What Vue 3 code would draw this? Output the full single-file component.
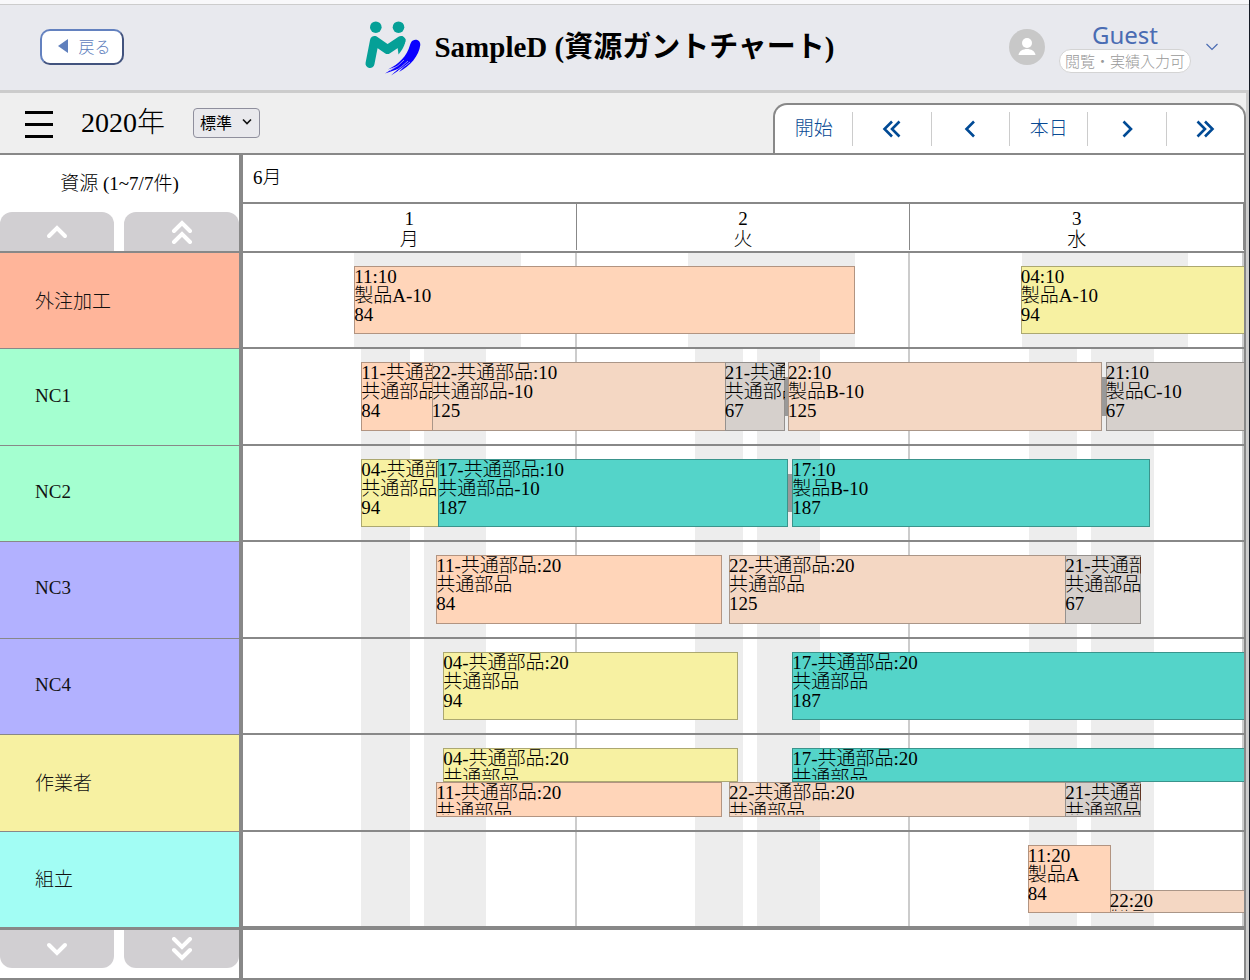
<script setup>
import { ref } from 'vue'

const TOTAL_HOURS = 72
const scale = ref('standard')

const days = [
  { num: '1', name: '月' },
  { num: '2', name: '火' },
  { num: '3', name: '水' }
]

const colors = {
  peach: '#ffd5b9',
  sand: '#f4d7c3',
  gray: '#d6d0cc',
  yellow: '#f7f1a2',
  teal: '#54d4c9'
}

const outsideShift = [[8, 20]]
const dayShift = [[8.5, 12], [13, 17.5]]

const bar = (from, to, color, lines, top = 0, height = 100) => ({ from, to, color, lines, top, height })

const rows = [
  {
    name: '外注加工', color: '#ffb59a', shift: outsideShift, links: [],
    bars: [
      bar(8, 44, 'peach', ['11:10', '製品A-10', '84']),
      bar(55.95, 80, 'yellow', ['04:10', '製品A-10', '94'])
    ]
  },
  {
    name: 'NC1', color: '#a4ffd0', shift: dayShift, links: [[39, 39.3], [61.8, 62.1]],
    bars: [
      bar(8.5, 13.7, 'peach', ['11-共通部品:10', '共通部品-10', '84']),
      bar(13.57, 34.75, 'sand', ['22-共通部品:10', '共通部品-10', '125']),
      bar(34.65, 39, 'gray', ['21-共通部品:10', '共通部品-10', '67']),
      bar(39.2, 61.8, 'sand', ['22:10', '製品B-10', '125']),
      bar(62.05, 80, 'gray', ['21:10', '製品C-10', '67'])
    ]
  },
  {
    name: 'NC2', color: '#a4ffd0', shift: dayShift, links: [[39.2, 39.5]],
    bars: [
      bar(8.5, 14.15, 'yellow', ['04-共通部品:10', '共通部品-10', '94']),
      bar(14.05, 39.2, 'teal', ['17-共通部品:10', '共通部品-10', '187']),
      bar(39.5, 65.25, 'teal', ['17:10', '製品B-10', '187'])
    ]
  },
  {
    name: 'NC3', color: '#b2b1ff', shift: dayShift, links: [],
    bars: [
      bar(13.9, 34.45, 'peach', ['11-共通部品:20', '共通部品', '84']),
      bar(34.95, 59.25, 'sand', ['22-共通部品:20', '共通部品', '125']),
      bar(59.15, 64.6, 'gray', ['21-共通部品:20', '共通部品', '67'])
    ]
  },
  {
    name: 'NC4', color: '#b2b1ff', shift: dayShift, links: [],
    bars: [
      bar(14.4, 35.6, 'yellow', ['04-共通部品:20', '共通部品', '94']),
      bar(39.5, 80, 'teal', ['17-共通部品:20', '共通部品', '187'])
    ]
  },
  {
    name: '作業者', color: '#f7f1a2', shift: dayShift, links: [],
    bars: [
      bar(14.4, 35.6, 'yellow', ['04-共通部品:20', '共通部品', '94'], 0, 50),
      bar(39.5, 80, 'teal', ['17-共通部品:20', '共通部品', '187'], 0, 50),
      bar(13.9, 34.45, 'peach', ['11-共通部品:20', '共通部品', '84'], 50, 50),
      bar(34.95, 59.25, 'sand', ['22-共通部品:20', '共通部品', '125'], 50, 50),
      bar(59.15, 64.6, 'gray', ['21-共通部品:20', '共通部品', '67'], 50, 50)
    ]
  },
  {
    name: '組立', color: '#a2fdf4', shift: dayShift, links: [],
    bars: [
      bar(56.45, 62.45, 'peach', ['11:20', '製品A', '84']),
      bar(62.35, 80, 'sand', ['22:20', '製品B', '125'], 66, 34)
    ]
  }
]

const pct = (hours) => (hours / TOTAL_HOURS) * 100 + '%'
const span = (from, to) => ({ left: pct(from), width: pct(to - from) })
const bands = (shift) => days.flatMap((_, d) => shift.map(([a, b]) => span(a + d * 24, b + d * 24)))
const barStyle = (b) => ({
  ...span(b.from, b.to),
  top: b.top + '%',
  height: b.height + '%',
  background: colors[b.color]
})
</script>

<template>
  <div class="app">
    <header class="header">
      <button class="back" type="button">
        <svg width="10" height="14" viewBox="0 0 10 14"><path d="M10 0V14L0 7Z" fill="#6080bd" /></svg>
        <span>戻る</span>
      </button>
      <div class="brand">
        <svg class="logo" width="58" height="56" viewBox="365 22 58 56">
          <g fill="#05a097">
            <circle cx="376.800" cy="28.200" r="5.800" />
            <circle cx="399.500" cy="28.200" r="5.800" />
          </g>
          <path d="M371 64.500L375.500 41.500L388.500 50.500L402 41.500" fill="none" stroke="#05a097" stroke-width="9" stroke-linecap="round" stroke-linejoin="round" />
          <path d="M406.500 40C406.500 46 403 51 399.500 55.500L398.500 48L403 37Z" fill="#05a097" />
          <path d="M414 41.500C417 39.800 421.500 41.500 421.300 46C420 57 411 67 400 73L404 68.500L392 76.500L399 70L386 74.500L397 67.500L389 70.500C400 65 408 57 411 46C412 43.500 412.500 42 414 41.500Z" fill="#0a00ff" />
          <g fill="none" stroke="#e8e9ee" stroke-width="0.600">
            <path d="M391 71.500Q400 67 405 61" />
            <path d="M394 73.500Q403 68 409 62" />
            <path d="M399 72Q406 67 411 63" />
          </g>
        </svg>
        <h1>SampleD (資源ガントチャート)</h1>
      </div>
      <button class="user" type="button">
        <svg class="avatar" width="36" height="36" viewBox="0 0 36 36">
          <circle cx="18" cy="18" r="18" fill="#c8c8c8" />
          <circle cx="18" cy="14" r="5" fill="#fff" />
          <path d="M9.500 26C10 22 14 20 18 20S26 22 26.500 26Z" fill="#fff" />
        </svg>
        <span class="who">
          <span class="name">Guest</span>
          <span class="role">閲覧・実績入力可</span>
        </span>
        <svg width="14" height="10" viewBox="0 0 14 10"><path d="M1.500 2L7 7.500L12.500 2" fill="none" stroke="#4a6cb3" stroke-width="1.200" /></svg>
      </button>
    </header>

    <main class="work">
      <div class="toolbar">
        <button class="menu" type="button" aria-label="メニュー"><i></i><i></i><i></i></button>
        <span class="year">2020年</span>
        <div class="select">
          <select v-model="scale" aria-label="表示">
            <option value="standard">標準</option>
          </select>
          <svg width="10" height="8" viewBox="0 0 10 8"><path d="M1 1.500L5 5.500L9 1.500" fill="none" stroke="#111" stroke-width="1.600" /></svg>
        </div>
        <nav class="nav">
          <button type="button">開始</button>
          <button type="button" aria-label="前へ大きく移動">
            <svg width="20" height="18" viewBox="0 0 20 18"><path d="M10 1.500L2.500 9L10 16.500M17.500 1.500L10 9L17.500 16.500" /></svg>
          </button>
          <button type="button" aria-label="前へ">
            <svg width="12" height="18" viewBox="0 0 12 18"><path d="M10 1.500L2.500 9L10 16.500" /></svg>
          </button>
          <button type="button">本日</button>
          <button type="button" aria-label="次へ">
            <svg width="12" height="18" viewBox="0 0 12 18"><path d="M2.500 1.500L10 9L2.500 16.500" /></svg>
          </button>
          <button type="button" aria-label="次へ大きく移動">
            <svg width="20" height="18" viewBox="0 0 20 18"><path d="M2.500 1.500L10 9L2.500 16.500M10 1.500L17.500 9L10 16.500" /></svg>
          </button>
        </nav>
      </div>

      <div class="gantt">
        <div class="corner">
          <div class="count">資源 (1~7/7件)</div>
          <div class="pager up">
            <button type="button" aria-label="上へ">
              <svg width="24" height="24" viewBox="0 0 24 24"><path d="M4 16L12 8L20 16" /></svg>
            </button>
            <button type="button" aria-label="先頭へ">
              <svg width="24" height="24" viewBox="0 0 24 24"><path d="M4 11L12 3L20 11M4 22L12 14L20 22" /></svg>
            </button>
          </div>
        </div>
        <div class="scale">
          <div class="month">6月</div>
          <div class="days">
            <div v-for="d in days" :key="d.num" class="day">
              <span>{{ d.num }}</span><span>{{ d.name }}</span>
            </div>
          </div>
        </div>

        <template v-for="row in rows" :key="row.name">
          <div class="resource" :style="{ background: row.color }">{{ row.name }}</div>
          <div class="track">
            <div v-for="(b, i) in bands(row.shift)" :key="'s' + i" class="band" :style="b"></div>
            <div class="lines"><i v-for="d in days" :key="d.num"></i></div>
            <div class="lane">
              <div v-for="(l, i) in row.links" :key="'l' + i" class="link" :style="span(l[0], l[1])"></div>
              <div v-for="(b, i) in row.bars" :key="i" class="bar" :style="barStyle(b)">
                <div class="label">
                  <div v-for="t in b.lines" :key="t">{{ t }}</div>
                </div>
              </div>
            </div>
          </div>
        </template>

        <div class="foot-left">
          <div class="pager down">
            <button type="button" aria-label="下へ">
              <svg width="24" height="24" viewBox="0 0 24 24"><path d="M4 8L12 16L20 8" /></svg>
            </button>
            <button type="button" aria-label="末尾へ">
              <svg width="24" height="24" viewBox="0 0 24 24"><path d="M4 2L12 10L20 2M4 13L12 21L20 13" /></svg>
            </button>
          </div>
        </div>
        <div class="foot-right"></div>
      </div>
    </main>
  </div>
</template>

<style>
body {
  margin: 0;
}
</style>

<style scoped>
.app {
  min-height: 100vh;
  box-sizing: border-box;
  display: flex;
  flex-direction: column;
  border-right: 1px solid #141a24;
  background: #efefef;
  color: #000;
  font-family: "Liberation Serif", "Noto Sans CJK JP", serif;
  font-size: 19px;
  font-weight: 300;
}
.app *,
.app *::before {
  box-sizing: border-box;
}
button {
  margin: 0;
  padding: 0;
  border: 0;
  background: none;
  font: inherit;
  color: inherit;
  cursor: pointer;
}
svg {
  display: block;
  flex: none;
}

.header {
  height: 93px;
  display: grid;
  grid-template-columns: 1fr auto 1fr;
  align-items: center;
  padding: 0 30px 1px 40px;
  border-top: 4px solid #f8f8fa;
  border-bottom: 3px solid #ccc;
  background: #e8e9ee;
  box-shadow: inset 0 1px #ccc;
}
.back {
  display: flex;
  align-items: center;
  justify-content: center;
  gap: 10px;
  width: 84px;
  height: 36px;
  padding: 0 0 2px 5px;
  border: 2px solid;
  border-color: #6381bf #42537e #42537e #6381bf;
  border-radius: 10px;
  background: #fff;
  color: #6080bd;
  font-family: "Noto Sans CJK JP", sans-serif;
  font-size: 16px;
  line-height: 24px;
}
.brand {
  display: flex;
  align-items: center;
  gap: 12px;
  margin-right: 60px;
}
.logo {
  margin-top: 5px;
}
h1 {
  margin: 0;
  font-size: 29px;
  line-height: 40px;
  font-weight: 700;
  white-space: nowrap;
}
.user {
  justify-self: end;
  display: flex;
  align-items: center;
  gap: 14px;
  font-family: "Noto Sans", "Noto Sans CJK JP", sans-serif;
}
.who {
  display: flex;
  flex-direction: column;
  align-items: center;
}
.name {
  color: #4a6cb3;
  font-size: 24px;
  line-height: 28px;
  font-weight: 400;
}
.role {
  padding: 0 5px;
  border: 1px solid #d4d4d4;
  border-radius: 12px;
  background: #fff;
  color: #999;
  font-family: "Noto Sans CJK JP", sans-serif;
  font-size: 15px;
  line-height: 22px;
  white-space: nowrap;
}

.work {
  flex: 1;
  display: flex;
  flex-direction: column;
  border-right: 3px solid #ccc;
}
.toolbar {
  display: flex;
  align-items: center;
  height: 60px;
  padding-left: 25px;
}
.menu {
  display: flex;
  flex-direction: column;
  gap: 9px;
  width: 28px;
  padding-top: 3px;
}
.menu i {
  height: 3px;
  background: #000;
}
.year {
  margin: 0 28px;
  font-size: 28px;
  line-height: 40px;
}
.select {
  position: relative;
}
.select select {
  appearance: none;
  width: 67px;
  height: 30px;
  padding: 0 0 2px 6px;
  border: 1px solid #8f8f9d;
  border-radius: 4px;
  background: #e9e9ed;
  color: #000;
  font-family: "Noto Sans CJK JP", sans-serif;
  font-size: 16px;
}
.select svg {
  position: absolute;
  right: 8px;
  top: 10px;
  pointer-events: none;
}
.nav {
  display: flex;
  align-self: flex-end;
  align-items: center;
  width: 473px;
  height: 50px;
  margin-left: auto;
  border: 2px solid #888;
  border-bottom: 0;
  border-radius: 14px 14px 0 0;
  background: #fff;
}
.nav button {
  flex: 1;
  display: flex;
  align-items: center;
  justify-content: center;
  height: 34px;
  border-right: 1px solid #ccc;
  color: #084a94;
  line-height: 28px;
}
.nav button:last-child {
  border-right: 0;
}
.nav path {
  fill: none;
  stroke: #004a95;
  stroke-width: 2.600;
}

.gantt {
  flex: 1;
  display: grid;
  grid-template-columns: 243px minmax(0, 1fr);
  grid-template-rows: auto repeat(7, minmax(84px, 1fr)) auto;
  border: 2px solid #888;
  border-left: 0;
  background: #fff;
}
.corner,
.resource,
.foot-left {
  border-right: 4px solid #888;
}
.corner,
.scale {
  height: 98px;
  border-bottom: 2px solid #888;
}
.corner {
  display: flex;
  flex-direction: column;
  justify-content: space-between;
}
.count {
  line-height: 57px;
  text-align: center;
}
.pager {
  display: grid;
  grid-template-columns: 114px 1fr;
  gap: 10px;
}
.pager button {
  display: flex;
  align-items: center;
  justify-content: center;
  height: 39px;
  border-radius: 12px 12px 0 0;
  background: #d1cfd2;
}
.pager.down button {
  height: 38px;
  border-radius: 0 0 12px 12px;
}
.pager path {
  fill: none;
  stroke: #fff;
  stroke-width: 4;
  stroke-linecap: round;
}
.month {
  height: 49px;
  padding-left: 10px;
  border-bottom: 2px solid #888;
  line-height: 45px;
}
.days {
  display: grid;
  grid-template-columns: repeat(3, 1fr);
  height: 45px;
}
.day {
  display: flex;
  flex-direction: column;
  align-items: center;
  padding-top: 4px;
  border-right: 1px solid #888;
  line-height: 21px;
}
.resource {
  display: flex;
  align-items: center;
  padding: 0 0 3px 35px;
  border-bottom: 1px solid #888;
  color: #111;
}
.track {
  position: relative;
  overflow: hidden;
  padding: 13px 0;
  border-bottom: 2px solid #888;
}
.band {
  position: absolute;
  top: 0;
  bottom: 0;
  background: #ededed;
}
.lines {
  position: absolute;
  inset: 0;
  display: grid;
  grid-template-columns: repeat(3, 1fr);
}
.lines i {
  border-right: 2px solid #ccc;
}
.lane {
  position: relative;
  height: 100%;
}
.bar {
  position: absolute;
  overflow: hidden;
  padding: 1px 0 2px;
  outline: 1px solid rgba(0, 0, 0, 0.3);
  outline-offset: -1px;
}
.label {
  height: 100%;
  overflow: hidden;
  line-height: 19px;
  white-space: nowrap;
}
.link {
  position: absolute;
  top: 22%;
  height: 56%;
  background: #999;
}
.foot-left,
.foot-right {
  height: 50px;
  border-top: 2px solid #888;
}
</style>
